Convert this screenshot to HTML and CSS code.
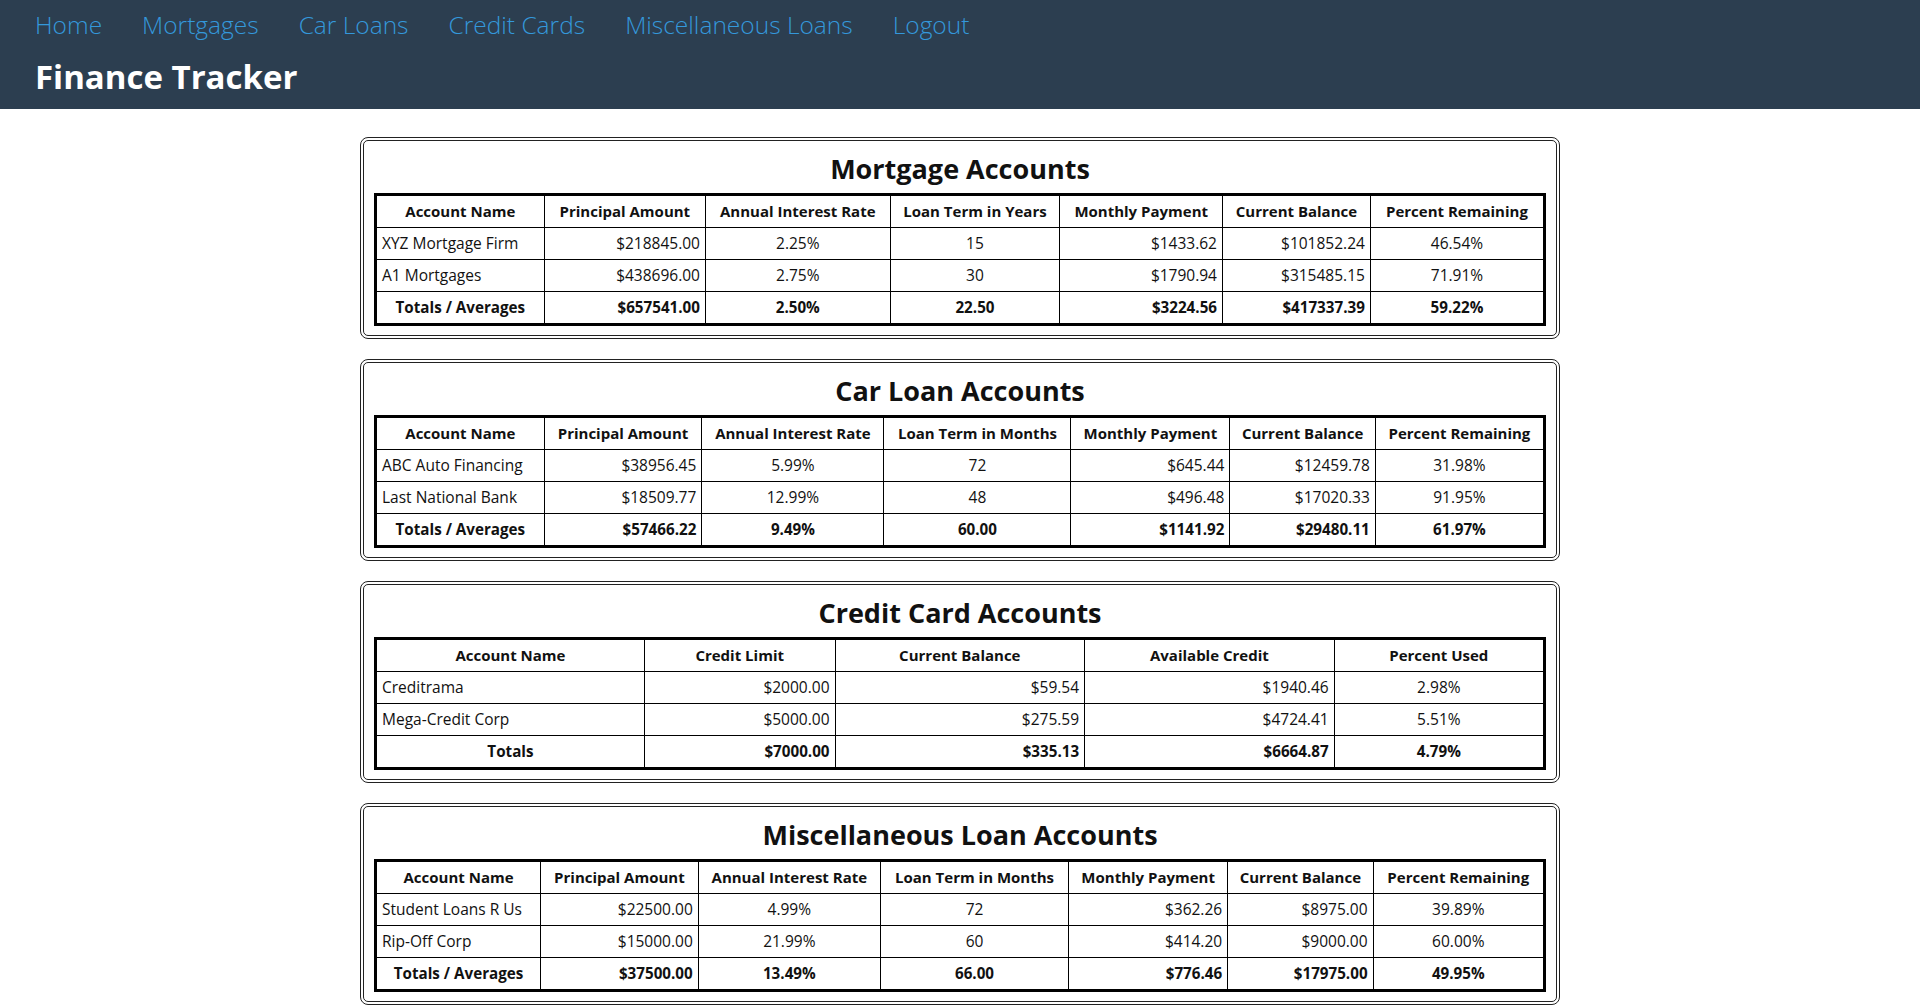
FILE: index.html
```html
<!DOCTYPE html>
<html lang="en">
<head>
<meta charset="utf-8">
<title>Finance Tracker</title>
<link rel="stylesheet" href="styles.css">
</head>
<body>
<header class="site-header">
  <nav class="nav">
    <a href="#">Home</a>
    <a href="#">Mortgages</a>
    <a href="#">Car Loans</a>
    <a href="#">Credit Cards</a>
    <a href="#">Miscellaneous Loans</a>
    <a href="#">Logout</a>
  </nav>
  <h1 class="site-title">Finance Tracker</h1>
</header>

<main class="content">
  <section class="panel">
    <h2 class="panel-title">Mortgage Accounts</h2>
    <table class="accounts loans mortgage">
      <thead>
        <tr><th>Account Name</th><th>Principal Amount</th><th>Annual Interest Rate</th><th>Loan Term in Years</th><th>Monthly Payment</th><th>Current Balance</th><th>Percent Remaining</th></tr>
      </thead>
      <tbody>
        <tr><td>XYZ Mortgage Firm</td><td>$218845.00</td><td>2.25%</td><td>15</td><td>$1433.62</td><td>$101852.24</td><td>46.54%</td></tr>
        <tr><td>A1 Mortgages</td><td>$438696.00</td><td>2.75%</td><td>30</td><td>$1790.94</td><td>$315485.15</td><td>71.91%</td></tr>
        <tr class="totals"><td>Totals / Averages</td><td>$657541.00</td><td>2.50%</td><td>22.50</td><td>$3224.56</td><td>$417337.39</td><td>59.22%</td></tr>
      </tbody>
    </table>
  </section>

  <section class="panel">
    <h2 class="panel-title">Car Loan Accounts</h2>
    <table class="accounts loans car">
      <thead>
        <tr><th>Account Name</th><th>Principal Amount</th><th>Annual Interest Rate</th><th>Loan Term in Months</th><th>Monthly Payment</th><th>Current Balance</th><th>Percent Remaining</th></tr>
      </thead>
      <tbody>
        <tr><td>ABC Auto Financing</td><td>$38956.45</td><td>5.99%</td><td>72</td><td>$645.44</td><td>$12459.78</td><td>31.98%</td></tr>
        <tr><td>Last National Bank</td><td>$18509.77</td><td>12.99%</td><td>48</td><td>$496.48</td><td>$17020.33</td><td>91.95%</td></tr>
        <tr class="totals"><td>Totals / Averages</td><td>$57466.22</td><td>9.49%</td><td>60.00</td><td>$1141.92</td><td>$29480.11</td><td>61.97%</td></tr>
      </tbody>
    </table>
  </section>

  <section class="panel">
    <h2 class="panel-title">Credit Card Accounts</h2>
    <table class="accounts cards">
      <thead>
        <tr><th>Account Name</th><th>Credit Limit</th><th>Current Balance</th><th>Available Credit</th><th>Percent Used</th></tr>
      </thead>
      <tbody>
        <tr><td>Creditrama</td><td>$2000.00</td><td>$59.54</td><td>$1940.46</td><td>2.98%</td></tr>
        <tr><td>Mega-Credit Corp</td><td>$5000.00</td><td>$275.59</td><td>$4724.41</td><td>5.51%</td></tr>
        <tr class="totals"><td>Totals</td><td>$7000.00</td><td>$335.13</td><td>$6664.87</td><td>4.79%</td></tr>
      </tbody>
    </table>
  </section>

  <section class="panel">
    <h2 class="panel-title">Miscellaneous Loan Accounts</h2>
    <table class="accounts loans misc">
      <thead>
        <tr><th>Account Name</th><th>Principal Amount</th><th>Annual Interest Rate</th><th>Loan Term in Months</th><th>Monthly Payment</th><th>Current Balance</th><th>Percent Remaining</th></tr>
      </thead>
      <tbody>
        <tr><td>Student Loans R Us</td><td>$22500.00</td><td>4.99%</td><td>72</td><td>$362.26</td><td>$8975.00</td><td>39.89%</td></tr>
        <tr><td>Rip-Off Corp</td><td>$15000.00</td><td>21.99%</td><td>60</td><td>$414.20</td><td>$9000.00</td><td>60.00%</td></tr>
        <tr class="totals"><td>Totals / Averages</td><td>$37500.00</td><td>13.49%</td><td>66.00</td><td>$776.46</td><td>$17975.00</td><td>49.95%</td></tr>
      </tbody>
    </table>
  </section>
</main>
</body>
</html>
```

FILE: styles.css
```css
* { box-sizing: border-box; }

html, body {
  margin: 0;
  padding: 0;
  background: #ffffff;
  font-family: "Open Sans", "Noto Sans", sans-serif;
  color: #111;
}

.site-header {
  background: #2c3e50;
  padding: 7px 35px 8px;
}

.nav {
  display: flex;
  gap: 40px;
}

.nav a {
  color: #3498db;
  text-decoration: none;
  font-size: 24.5px;
  font-weight: 300;
  line-height: 36px;
}

.site-title {
  margin: 10px 0 0;
  color: #ffffff;
  font-size: 33px;
  font-weight: 700;
  line-height: 48px;
}

.content {
  padding: 28px 0 20px;
  display: flex;
  flex-direction: column;
  gap: 20px;
}

.panel {
  width: 1200px;
  margin: 0 auto;
  border: 4px double #222;
  border-radius: 8px;
  padding: 0 10px 9px;
}

.panel-title {
  margin: 9px 0 5px;
  text-align: center;
  font-size: 27px;
  font-weight: 700;
  line-height: 38px;
  color: #111;
}

.accounts {
  width: 100%;
  border-collapse: collapse;
  table-layout: fixed;
  border: 3px solid #000;
  font-size: 15.5px;
}

.accounts th,
.accounts td {
  border: 1px solid #000;
  padding: 5px 5px;
  line-height: 21px;
  white-space: nowrap;
}

.accounts th {
  font-size: 15px;
  font-weight: 700;
  text-align: center;
}

.accounts td { text-align: center; }

.accounts .totals td { font-weight: 700; font-size: 15.2px; }
.accounts tbody td:first-child { text-align: left; }
.accounts tbody .totals td:first-child { text-align: center; }

/* loan tables: principal, monthly payment, current balance are right-aligned */
.loans td:nth-child(2),
.loans td:nth-child(5),
.loans td:nth-child(6) { text-align: right; }

/* credit cards: money columns right-aligned */
.cards td:nth-child(2),
.cards td:nth-child(3),
.cards td:nth-child(4) { text-align: right; }

/* column widths */
.mortgage th:nth-child(1) { width: 14.43%; }
.mortgage th:nth-child(2) { width: 13.80%; }
.mortgage th:nth-child(3) { width: 15.79%; }
.mortgage th:nth-child(4) { width: 14.53%; }
.mortgage th:nth-child(5) { width: 13.91%; }
.mortgage th:nth-child(6) { width: 12.65%; }
.mortgage th:nth-child(7) { width: 14.89%; }

.car th:nth-child(1) { width: 14.43%; }
.car th:nth-child(2) { width: 13.49%; }
.car th:nth-child(3) { width: 15.58%; }
.car th:nth-child(4) { width: 15.99%; }
.car th:nth-child(5) { width: 13.60%; }
.car th:nth-child(6) { width: 12.44%; }
.car th:nth-child(7) { width: 14.47%; }

.cards th:nth-child(1) { width: 23.00%; }
.cards th:nth-child(2) { width: 16.31%; }
.cards th:nth-child(3) { width: 21.35%; }
.cards th:nth-child(4) { width: 21.35%; }
.cards th:nth-child(5) { width: 17.99%; }

.misc th:nth-child(1) { width: 14.12%; }
.misc th:nth-child(2) { width: 13.49%; }
.misc th:nth-child(3) { width: 15.58%; }
.misc th:nth-child(4) { width: 16.11%; }
.misc th:nth-child(5) { width: 13.60%; }
.misc th:nth-child(6) { width: 12.44%; }
.misc th:nth-child(7) { width: 14.66%; }
```
